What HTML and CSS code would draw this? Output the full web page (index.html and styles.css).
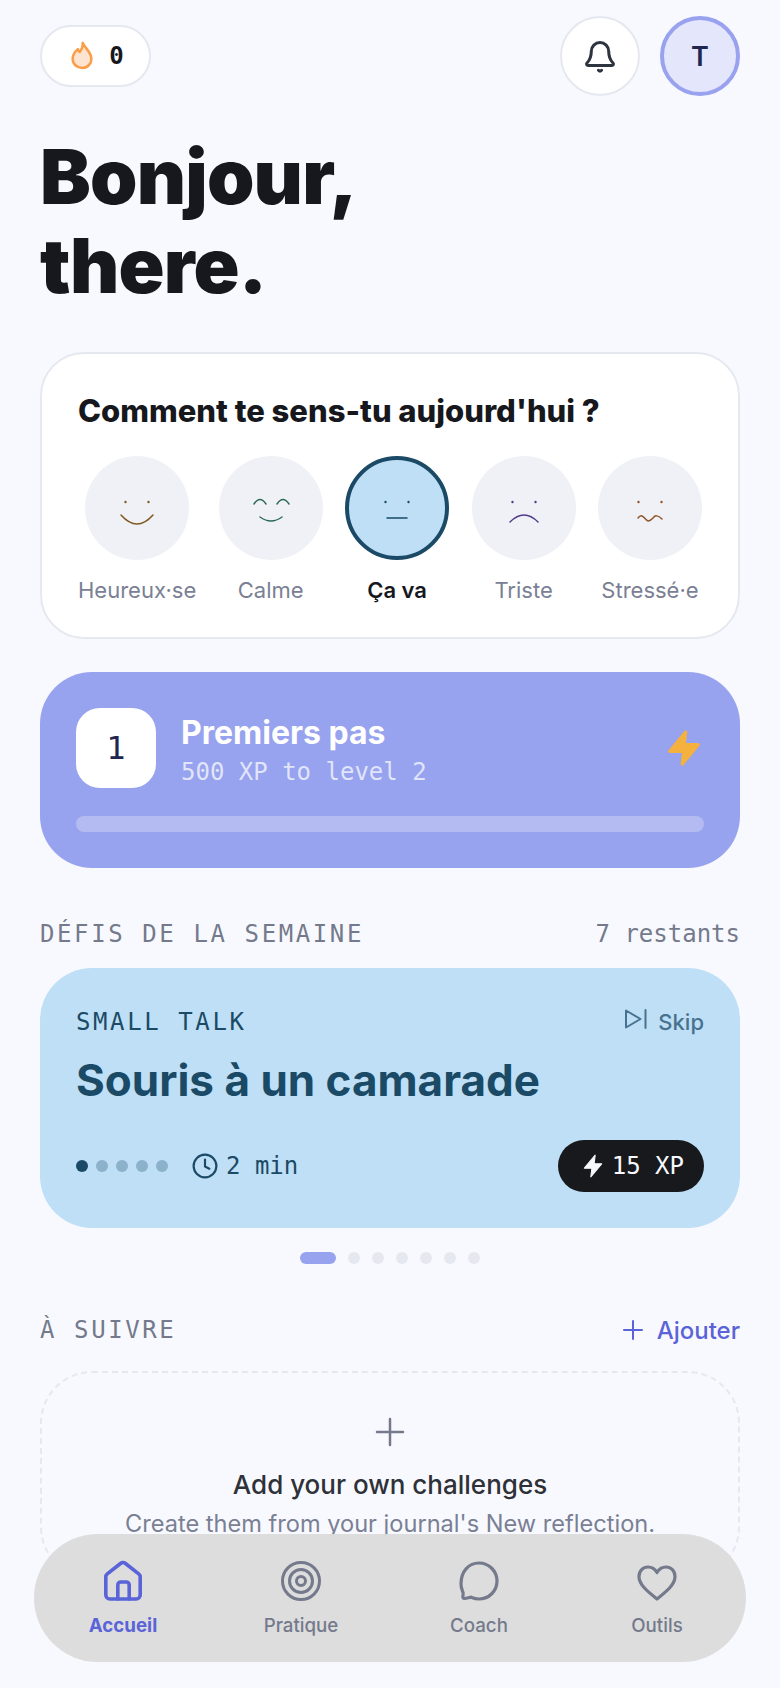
FILE: index.html
```html
<!DOCTYPE html>
<html lang="fr">
<head>
<meta charset="UTF-8">
<meta name="viewport" content="width=device-width, initial-scale=1.0">
<title>Accueil</title>
<link rel="stylesheet" href="styles.css">
</head>
<body>

<div class="screen">
  <header class="topbar">
    <div class="streak">
      <svg width="30" height="30" viewBox="0 0 24 24" fill="#fde4d0" stroke="#fb9c47" stroke-width="2" stroke-linejoin="round"><path d="M12.500 1.500c.5 3.500-.8 5.200-2.300 7.300-.8-.6-1.300-1.400-1.500-2.300C6 8.800 4.500 11.300 4.500 14.200c0 4.200 3.300 7.300 7.700 7.300s7.300-3.200 7.300-7.200c0-5.300-4.500-7.800-7-12.800z"/></svg>
      <span class="streak-num">0</span>
    </div>
    <div class="top-actions">
      <button class="round-btn">
        <svg width="38" height="38" viewBox="0 0 24 24" fill="none" stroke="#2e3340" stroke-width="1.900" stroke-linecap="round" stroke-linejoin="round"><path d="M6.500 9a5.500 5.500 0 0 1 11 0c0 4.500 1.300 6 2.700 7.400.6.600.2 1.600-.7 1.600h-15c-.9 0-1.300-1-.7-1.600C5.200 15 6.500 13.500 6.500 9z"/><path d="M11 21c.6.600 1.400.6 2 0"/></svg>
      </button>
      <div class="avatar">T</div>
    </div>
  </header>

  <h1 class="hello">Bonjour,<br>there.</h1>

  <section class="mood-card">
    <h2>Comment te sens-tu aujourd'hui ?</h2>
    <div class="moods">
      <div class="mood">
        <div class="face">
          <svg width="40" height="40" viewBox="-20 -20 40 40" fill="none" stroke="#7c5a1e" stroke-width="1.500" stroke-linecap="round"><circle cx="-11.500" cy="-6" r="1.200" fill="#7c5a1e" stroke="none"/><circle cx="11.500" cy="-6" r="1.200" fill="#7c5a1e" stroke="none"/><path d="M-16 7Q0 25 16 7"/></svg>
        </div>
        <span>Heureux·se</span>
      </div>
      <div class="mood">
        <div class="face">
          <svg width="40" height="40" viewBox="-20 -20 40 40" fill="none" stroke="#2b6a55" stroke-width="1.500" stroke-linecap="round"><path d="M-17-4Q-11-13-5-4M6-4Q12-13 18-4"/><path d="M-11 9Q0 17 11 9"/></svg>
        </div>
        <span>Calme</span>
      </div>
      <div class="mood active">
        <div class="face">
          <svg width="40" height="40" viewBox="-20 -20 40 40" fill="none" stroke="#1b4a66" stroke-width="1.500" stroke-linecap="round"><circle cx="-11.500" cy="-6" r="1.200" fill="#1b4a66" stroke="none"/><circle cx="11.500" cy="-6" r="1.200" fill="#1b4a66" stroke="none"/><path d="M-10 10H10"/></svg>
        </div>
        <span>Ça va</span>
      </div>
      <div class="mood">
        <div class="face">
          <svg width="40" height="40" viewBox="-20 -20 40 40" fill="none" stroke="#4f3a8c" stroke-width="1.500" stroke-linecap="round"><circle cx="-11.500" cy="-6" r="1.200" fill="#4f3a8c" stroke="none"/><circle cx="11.500" cy="-6" r="1.200" fill="#4f3a8c" stroke="none"/><path d="M-14 14Q0 0 14 14"/></svg>
        </div>
        <span>Triste</span>
      </div>
      <div class="mood">
        <div class="face">
          <svg width="40" height="40" viewBox="-20 -20 40 40" fill="none" stroke="#8f5427" stroke-width="1.500" stroke-linecap="round"><circle cx="-11.500" cy="-6" r="1.200" fill="#8f5427" stroke="none"/><circle cx="11.500" cy="-6" r="1.200" fill="#8f5427" stroke="none"/><path d="M-12 10C-9 6-7 8-4 11.500-2 14 0 13 3 10 5 7 8 7 12 11"/></svg>
        </div>
        <span>Stressé·e</span>
      </div>
    </div>
  </section>

  <section class="level-card">
    <div class="level-top">
      <div class="level-num">1</div>
      <div class="level-text">
        <div class="level-name">Premiers pas</div>
        <div class="level-sub">500 XP to level 2</div>
      </div>
      <svg class="level-bolt" width="40" height="40" viewBox="0 0 24 24" fill="#f5b13d" stroke="#f5b13d" stroke-width="2" stroke-linejoin="round"><path d="M13 2.500 3.500 14H12l-1 7.500L20.500 10H12z"/></svg>
    </div>
    <div class="level-bar"></div>
  </section>

  <div class="section-head">
    <span class="section-title">DÉFIS DE LA SEMAINE</span>
    <span class="section-count">7 restants</span>
  </div>

  <section class="challenge">
    <div class="challenge-top">
      <span class="challenge-tag">SMALL TALK</span>
      <span class="skip">
        <svg width="24" height="24" viewBox="0 0 24 24" fill="none" stroke="#487390" stroke-width="2" stroke-linecap="round" stroke-linejoin="round"><path d="M2 3.500v17l14.500-8.500z"/><path d="M21.500 3v18"/></svg>
        Skip
      </span>
    </div>
    <h3>Souris à un camarade</h3>
    <div class="challenge-bottom">
      <div class="dots">
        <i class="on"></i><i></i><i></i><i></i><i></i>
      </div>
      <span class="duration">
        <svg width="26" height="26" viewBox="0 0 24 24" fill="none" stroke="#1b4a66" stroke-width="2" stroke-linecap="round" stroke-linejoin="round"><circle cx="12" cy="12" r="10.500"/><path d="M12 6v6.500l4 2"/></svg>
        2 min
      </span>
      <span class="xp">
        <svg width="26" height="26" viewBox="0 0 24 24" fill="#f8f9fe" stroke="#f8f9fe" stroke-width="1" stroke-linejoin="round"><path d="M14 2 4 14h7l-1 8 10-12h-7z"/></svg>
        15 XP
      </span>
    </div>
  </section>

  <div class="pager">
    <i class="on"></i><i></i><i></i><i></i><i></i><i></i><i></i>
  </div>

  <div class="section-head next-head">
    <span class="section-title">À SUIVRE</span>
    <span class="add">
      <svg width="24" height="24" viewBox="0 0 24 24" fill="none" stroke="#5a63d8" stroke-width="2" stroke-linecap="round"><path d="M12 3v18M3 12h18"/></svg>
      Ajouter
    </span>
  </div>

  <section class="empty">
    <svg width="32" height="32" viewBox="0 0 32 32" fill="none" stroke="#747a8c" stroke-width="2.500" stroke-linecap="round"><path d="M16 3v26M3 16h26"/></svg>
    <div class="empty-title">Add your own challenges</div>
    <div class="empty-sub">Create them from your journal's New reflection.</div>
  </section>

  <nav class="tabbar">
    <div class="tab active">
      <svg width="42" height="42" viewBox="0 0 42 42" fill="none" stroke="#5a63d8" stroke-width="3.600" stroke-linecap="round" stroke-linejoin="round"><path d="M3.800 17q0-2 1.500-3.200L18.500 3.500a4 4 0 0 1 5 0l13.200 10.300q1.500 1.200 1.500 3.200v18a4 4 0 0 1-4 4H7.800a4 4 0 0 1-4-4z"/><path d="M15.800 39V25a3 3 0 0 1 3-3h5.400a3 3 0 0 1 3 3v14"/></svg>
      <span>Accueil</span>
    </div>
    <div class="tab">
      <svg width="42" height="42" viewBox="0 0 42 42" fill="none" stroke="#747a8c" stroke-width="3"><circle cx="21" cy="21" r="18.500"/><circle cx="21" cy="21" r="11.500"/><circle cx="21" cy="21" r="4.500"/></svg>
      <span>Pratique</span>
    </div>
    <div class="tab">
      <svg width="42" height="42" viewBox="0 0 42 42" fill="none" stroke="#747a8c" stroke-width="3.200" stroke-linecap="round" stroke-linejoin="round"><path d="M21 3c10 0 18 8 18 18s-8 18-18 18c-3 0-6-1-8-1.800-2 .3-5 1.500-7 1.300-1.300-.2-1.300-1.500-1-3 .5-1.500.5-2.500-.5-4.500-1-2.300-1.500-4.800-1.500-7C3 11 11 3 21 3z"/></svg>
      <span>Coach</span>
    </div>
    <div class="tab">
      <svg width="42" height="42" viewBox="0 0 42 42" fill="none" stroke="#747a8c" stroke-width="3.200" stroke-linecap="round" stroke-linejoin="round"><path d="M21 39C11 31 3 24.500 3 16.500 3 11 7 7 12 7c4 0 7 2 9 5.500C23 9 26 7 30 7c5 0 9 4 9 9.500C39 24.500 31 31 21 39z"/></svg>
      <span>Outils</span>
    </div>
  </nav>
</div>

</body>
</html>
```

FILE: styles.css
```css
* {
  box-sizing: border-box;
}
html, body {
  margin: 0;
  padding: 0;
}
body {
  background: #f8f9fe;
  font-family: "Inter", "Liberation Sans", sans-serif;
  color: #16181d;
}
.screen {
  position: relative;
  width: 780px;
  height: 1688px;
  overflow: hidden;
  padding: 16px 40px 0;
}

/* top */
.topbar {
  display: flex;
  justify-content: space-between;
  align-items: center;
}
.streak {
  display: flex;
  align-items: center;
  justify-content: center;
  gap: 12px;
  width: 111px;
  height: 62px;
  background: #fff;
  border: 2px solid #e6e8f0;
  border-radius: 31px;
}
.streak-num {
  font-family: "DejaVu Sans Mono", monospace;
  font-size: 24px;
  font-weight: 700;
}
.top-actions {
  display: flex;
  gap: 20px;
}
.round-btn {
  display: flex;
  align-items: center;
  justify-content: center;
  width: 80px;
  height: 80px;
  padding: 0;
  background: #fff;
  border: 2px solid #e6e8f0;
  border-radius: 50%;
}
.avatar {
  display: flex;
  align-items: center;
  justify-content: center;
  width: 80px;
  height: 80px;
  background: #e4e6fb;
  border: 4px solid #98a2ef;
  border-radius: 50%;
  color: #20264f;
  font-size: 27px;
  font-weight: 600;
}
.hello {
  margin: 36px 0 0;
  font-size: 76px;
  line-height: 89px;
  font-weight: 900;
  letter-spacing: -0.8px;
}

/* mood */
.mood-card {
  margin-top: 42px;
  height: 287px;
  padding: 39px 36px 0;
  background: #fff;
  border: 2px solid #e6e8f0;
  border-radius: 44px;
}
.mood-card h2 {
  margin: 0;
  font-size: 31px;
  line-height: 36px;
  font-weight: 800;
}
.moods {
  display: flex;
  justify-content: space-between;
  margin-top: 27px;
}
.mood {
  display: flex;
  flex-direction: column;
  align-items: center;
  gap: 16px;
  min-width: 104px;
  font-size: 22px;
  line-height: 28px;
  color: #7a8094;
}
.mood.active {
  color: #16181d;
  font-weight: 600;
}
.face {
  display: flex;
  align-items: center;
  justify-content: center;
  width: 104px;
  height: 104px;
  background: #f0f1f6;
  border-radius: 50%;
}
.mood.active .face {
  background: #bedff5;
  border: 4px solid #1b4a66;
}

/* level */
.level-card {
  margin-top: 33px;
  height: 196px;
  padding: 36px 36px 0;
  background: #97a3ee;
  border-radius: 52px;
}
.level-top {
  display: flex;
  align-items: center;
  gap: 25px;
}
.level-num {
  display: flex;
  align-items: center;
  justify-content: center;
  width: 80px;
  height: 80px;
  background: #fff;
  border-radius: 24px;
  color: #20264f;
  font-family: "DejaVu Sans Mono", monospace;
  font-size: 32px;
}
.level-text {
  flex: 1;
  padding-top: 4px;
}
.level-name {
  color: #fff;
  font-size: 32px;
  line-height: 38px;
  font-weight: 700;
}
.level-sub {
  margin-top: 5px;
  color: rgba(255,255,255,0.72);
  font-family: "DejaVu Sans Mono", monospace;
  font-size: 24px;
  line-height: 30px;
}
.level-bar {
  height: 16px;
  margin-top: 28px;
  background: #b3bbf2;
  border-radius: 8px;
}

/* sections */
.section-head {
  display: flex;
  justify-content: space-between;
  align-items: center;
  margin-top: 52px;
  height: 28px;
  color: #747a8c;
  font-family: "DejaVu Sans Mono", monospace;
  font-size: 24px;
}
.section-title {
  letter-spacing: 2.6px;
}
.add {
  display: flex;
  align-items: center;
  gap: 12px;
  color: #5a63d8;
  font-family: "Inter", sans-serif;
  font-size: 24px;
  font-weight: 500;
}

/* challenge */
.challenge {
  margin-top: 20px;
  height: 260px;
  padding: 39px 36px 0;
  background: #bedff5;
  border-radius: 52px;
  color: #1b4a66;
}
.challenge-top {
  display: flex;
  justify-content: space-between;
  align-items: center;
}
.challenge-tag {
  font-family: "DejaVu Sans Mono", monospace;
  font-size: 24px;
  letter-spacing: 2.6px;
}
.skip {
  display: flex;
  align-items: center;
  gap: 10px;
  color: #487390;
  font-size: 22px;
  font-weight: 500;
}
.skip svg {
  margin-bottom: 5px;
}
.challenge h3 {
  margin: 18px 0 0;
  font-size: 44px;
  line-height: 52px;
  font-weight: 700;
}
.challenge-bottom {
  display: flex;
  align-items: center;
  margin-top: 34px;
}
.dots {
  display: flex;
  gap: 8px;
}
.dots i {
  width: 12px;
  height: 12px;
  background: #1b4a66;
  border-radius: 50%;
  opacity: 0.3;
}
.dots i.on {
  opacity: 1;
}
.duration {
  display: flex;
  align-items: center;
  gap: 8px;
  margin-left: 24px;
  font-family: "DejaVu Sans Mono", monospace;
  font-size: 24px;
}
.xp {
  display: flex;
  align-items: center;
  gap: 6px;
  height: 52px;
  margin-left: auto;
  padding: 0 20px 0 22px;
  background: #18191d;
  border-radius: 26px;
  color: #f8f9fe;
  font-family: "DejaVu Sans Mono", monospace;
  font-size: 24px;
}

/* pager */
.pager {
  display: flex;
  justify-content: center;
  gap: 12px;
  margin-top: 24px;
}
.pager i {
  width: 12px;
  height: 12px;
  background: #e6e8f0;
  border-radius: 6px;
}
.pager i.on {
  width: 36px;
  background: #97a3ee;
}

/* empty */
.empty {
  display: flex;
  flex-direction: column;
  align-items: center;
  height: 208px;
  margin-top: 27px;
  padding-top: 43px;
  border: 2px dashed #e6e8f0;
  border-radius: 52px;
}
.empty-title {
  margin-top: 20px;
  color: #2e3138;
  font-size: 26px;
  line-height: 34px;
  font-weight: 500;
}
.empty-sub {
  margin-top: 6px;
  color: #7a8094;
  font-size: 23.6px;
  line-height: 32px;
}

/* bottom nav */
.tabbar {
  position: absolute;
  left: 34px;
  top: 1534px;
  display: grid;
  grid-template-columns: repeat(4, 1fr);
  width: 712px;
  height: 128px;
  padding-top: 26px;
  background: rgba(220,220,220,0.97);
  border-radius: 64px;
}
.tab {
  display: flex;
  flex-direction: column;
  align-items: center;
  gap: 11px;
  color: #747a8c;
  font-size: 18.7px;
  line-height: 26px;
  font-weight: 500;
}
.tab.active {
  color: #5a63d8;
  font-weight: 700;
}
```
